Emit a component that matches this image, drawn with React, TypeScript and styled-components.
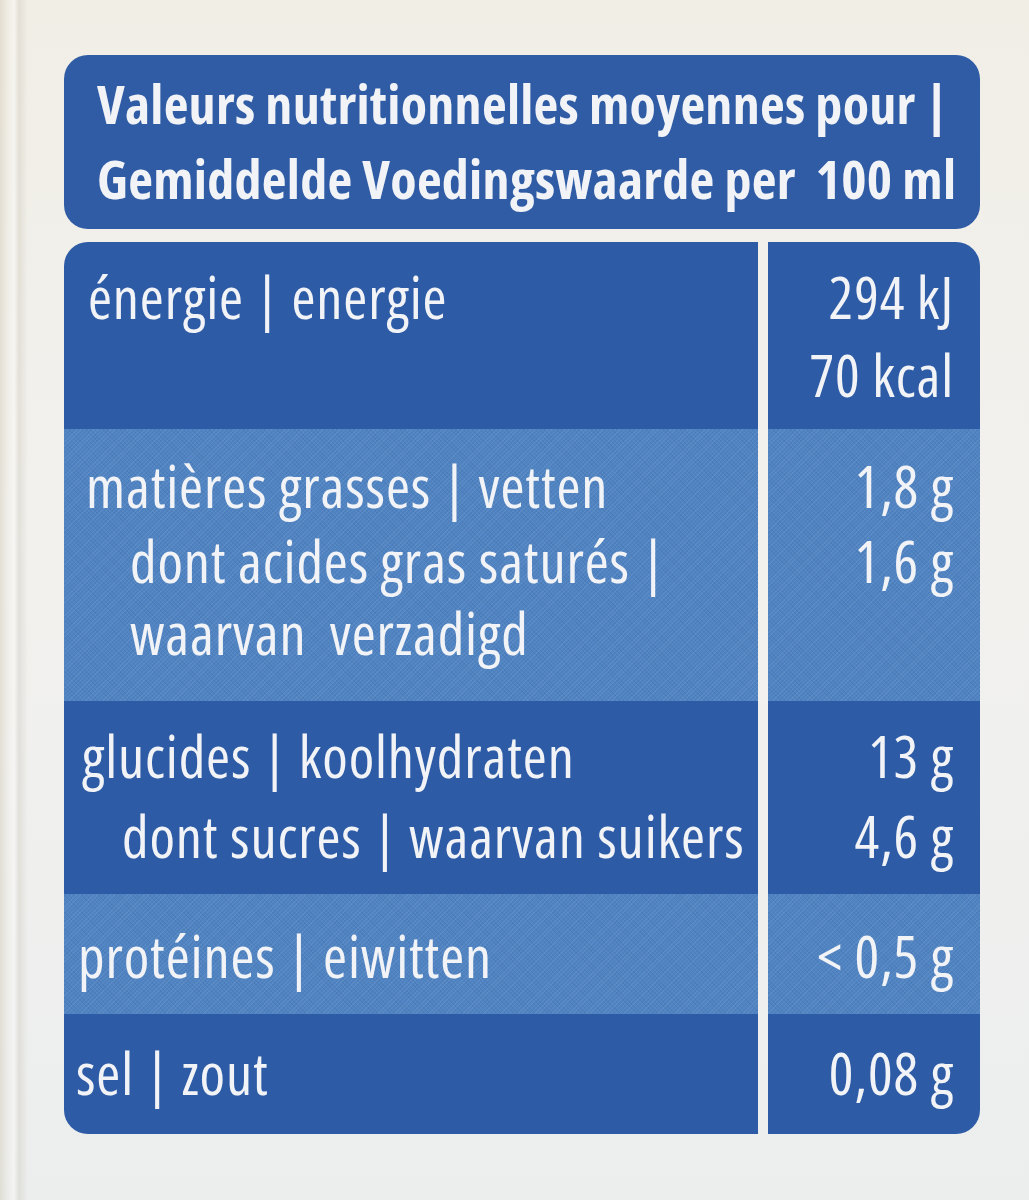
import React from "react";
import styled, { createGlobalStyle, css } from "styled-components";

const GlobalStyle = createGlobalStyle`
  html, body { margin: 0; padding: 0; }
  body {
    background: #f1f0ec;
    font-family: "Open Sans", "Noto Sans", sans-serif;
  }
`;

type Tone = "dark" | "light";

const Page = styled.div`
  box-sizing: border-box;
  width: 1029px;
  height: 1200px;
  padding: 55px 0 0 64px;
  background:
    linear-gradient(90deg, rgba(200,190,165,0.35) 0px, rgba(235,230,218,0.2) 8px, rgba(255,255,255,0.35) 14px, rgba(205,200,188,0.4) 19px, rgba(0,0,0,0) 28px),
    linear-gradient(180deg, #f1eee6 0%, #f2f1ee 45%, #eceeee 100%);
  overflow: hidden;
`;

const Label = styled.div`
  width: 916px;
  display: flex;
  flex-direction: column;
  gap: 13px;
  color: #f1f3f7;
`;

const Header = styled.header`
  box-sizing: border-box;
  height: 174px;
  padding: 11px 0 0 33px;
  border-radius: 24px;
  background: #2f5ca5;
  font-weight: 700;
  font-stretch: 75%;
  font-size: 54px;
  line-height: 75px;
  letter-spacing: 0.005em;
  white-space: pre;
`;

const Table = styled.div`
  display: flex;
  flex-direction: column;
  border-radius: 24px;
  overflow: hidden;
`;

const Row = styled.div<{ $h: number }>`
  display: grid;
  grid-template-columns: 694px 212px;
  column-gap: 10px;
  height: ${(p) => p.$h}px;
`;

const toneBg = (t: Tone) =>
  t === "dark"
    ? css`
        background: #2d5ba6;
      `
    : css`
        background:
          repeating-linear-gradient(135deg, rgba(255,255,255,0.07) 0 1px, rgba(0,0,0,0) 1px 3px),
          repeating-linear-gradient(45deg, rgba(20,50,110,0.08) 0 1px, rgba(0,0,0,0) 1px 3px),
          #5083c1;
      `;

const Cell = styled.div<{ $tone: Tone; $top: number }>`
  ${(p) => toneBg(p.$tone)}
  box-sizing: border-box;
  padding-top: ${(p) => p.$top}px;
  font-weight: 400;
  font-stretch: 75%;
  font-size: 58px;
  line-height: 76px;
  letter-spacing: 0.015em;
  white-space: pre;
`;

const NameCell = styled(Cell)<{ $left: number }>`
  padding-left: ${(p) => p.$left}px;
`;

const ValueCell = styled(Cell)`
  padding-right: 26px;
  text-align: right;
`;

const Line = styled.div<{ $indent?: number; $gap?: number }>`
  padding-left: ${(p) => p.$indent || 0}px;
  margin-top: ${(p) => p.$gap || 0}px;
`;

type RowData = {
  h: number;
  tone: Tone;
  top: number;
  left: number;
  names: { t: string; indent?: number; gap?: number }[];
  values: { t: string; gap?: number }[];
};

const rows: RowData[] = [
  {
    h: 187,
    tone: "dark",
    top: 17,
    left: 24,
    names: [{ t: "énergie | energie" }],
    values: [{ t: "294 kJ" }, { t: "70 kcal", gap: 2 }],
  },
  {
    h: 272,
    tone: "light",
    top: 19,
    left: 22,
    names: [
      { t: "matières grasses | vetten" },
      { t: "dont acides gras saturés |", indent: 44, gap: -1 },
      { t: "waarvan  verzadigd", indent: 44, gap: -4 },
    ],
    values: [{ t: "1,8 g" }, { t: "1,6 g", gap: -1 }],
  },
  {
    h: 193,
    tone: "dark",
    top: 17,
    left: 18,
    names: [
      { t: "glucides | koolhydraten" },
      { t: "dont sucres | waarvan suikers", indent: 40, gap: 4 },
    ],
    values: [{ t: "13 g" }, { t: "4,6 g", gap: 4 }],
  },
  {
    h: 120,
    tone: "light",
    top: 24,
    left: 14,
    names: [{ t: "protéines | eiwitten" }],
    values: [{ t: "< 0,5 g" }],
  },
  {
    h: 120,
    tone: "dark",
    top: 21,
    left: 12,
    names: [{ t: "sel | zout" }],
    values: [{ t: "0,08 g" }],
  },
];

export default function App() {
  return (
    <>
      <GlobalStyle />
      <Page>
        <Label>
          <Header>
            {"Valeurs nutritionnelles moyennes pour |\nGemiddelde Voedingswaarde per  100 ml"}
          </Header>
          <Table>
            {rows.map((r, i) => (
              <Row key={i} $h={r.h}>
                <NameCell $tone={r.tone} $top={r.top} $left={r.left}>
                  {r.names.map((n, j) => (
                    <Line key={j} $indent={n.indent} $gap={n.gap}>
                      {n.t}
                    </Line>
                  ))}
                </NameCell>
                <ValueCell $tone={r.tone} $top={r.top}>
                  {r.values.map((v, j) => (
                    <Line key={j} $gap={v.gap}>
                      {v.t}
                    </Line>
                  ))}
                </ValueCell>
              </Row>
            ))}
          </Table>
        </Label>
      </Page>
    </>
  );
}
